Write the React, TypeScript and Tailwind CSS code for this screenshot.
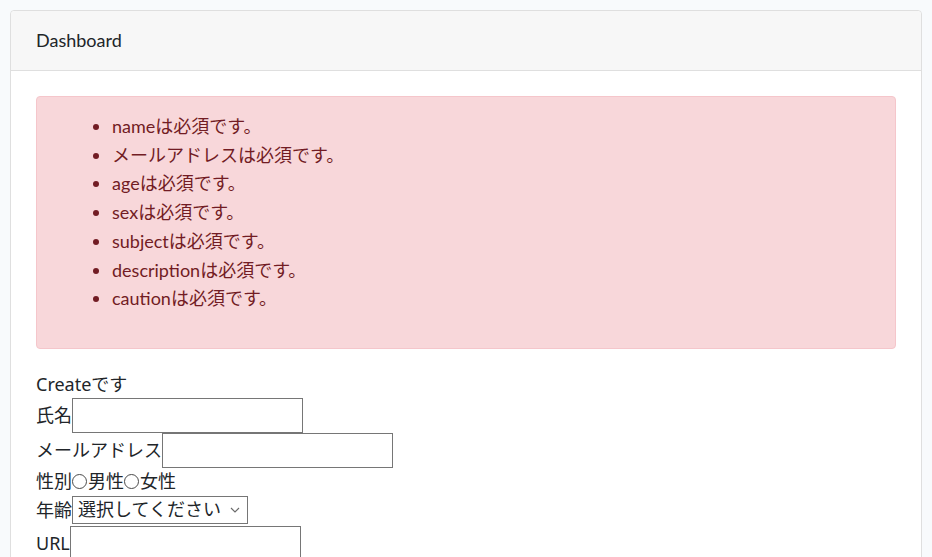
import React from 'react';

const errors = [
  'nameは必須です。',
  'メールアドレスは必須です。',
  'ageは必須です。',
  'sexは必須です。',
  'subjectは必須です。',
  'descriptionは必須です。',
  'cautionは必須です。',
];

const sans = "font-['Lato','Noto_Sans_CJK_JP',sans-serif]";
const form = "font-['Noto_Sans','Noto_Sans_CJK_JP',sans-serif]";

function Radio({ label }: { label: string }) {
  return (
    <span className="inline-flex items-center">
      <span className="inline-block shrink-0 w-[15px] h-[15px] mr-[1px] rounded-full border border-[#4a4a4a] bg-white" />
      <span>{label}</span>
    </span>
  );
}

export default function App() {
  return (
    <div className="min-h-[557px] bg-[#f8fafc] pt-[10px] px-[10px] overflow-hidden">
      <div className={`${sans} bg-white border border-[#dfdfdf] rounded-[4px] text-[#212529]`}>
        <div className="h-[60px] flex items-center px-[25px] bg-[#f7f7f7] border-b border-[#dfdfdf] rounded-t-[4px] text-[18px]">
          Dashboard
        </div>
        <div className="px-[25px] pt-[25px] pb-4">
          <div className="bg-[#f8d7da] border border-[#f5c6cb] rounded-[4px] text-[#721c24] pt-[15px] pb-[19px] pl-[20px]">
            <ul className="list-disc pl-[55px] mb-4 text-[18px] leading-[28.7px] marker:text-[#721c24]">
              {errors.map((e) => (
                <li key={e}>{e}</li>
              ))}
            </ul>
          </div>

          <div className={`${form} text-[18px] text-[#212529] mt-[23px]`}>
            <div className="h-[26px] flex items-center">Createです</div>
            <div className="h-[35px] flex items-center">
              <span>氏名</span>
              <input type="text" className="w-[231px] h-[35px] border border-[#767676] bg-white outline-none" />
            </div>
            <div className="h-[35px] flex items-center">
              <span>メールアドレス</span>
              <input type="text" className="w-[231px] h-[35px] border border-[#767676] bg-white outline-none" />
            </div>
            <div className="h-[28px] flex items-center">
              <span>性別</span>
              <Radio label="男性" />
              <Radio label="女性" />
            </div>
            <div className="h-[30px] flex items-start">
              <span className="leading-[28px]">年齢</span>
              <div className="w-[176px] h-[28px] border border-[#767676] bg-white flex items-center justify-between pl-[5px] pr-[7px]">
                <span>選択してください</span>
                <svg width="10" height="6" viewBox="0 0 10 6" fill="none" stroke="#6b6b6b" strokeWidth="1.2">
                  <path d="M1 1l4 4 4-4" />
                </svg>
              </div>
            </div>
            <div className="h-[35px] flex items-center">
              <span>URL</span>
              <input type="text" className="w-[231px] h-[35px] border border-[#767676] bg-white outline-none" />
            </div>
          </div>
        </div>
      </div>
    </div>
  );
}
